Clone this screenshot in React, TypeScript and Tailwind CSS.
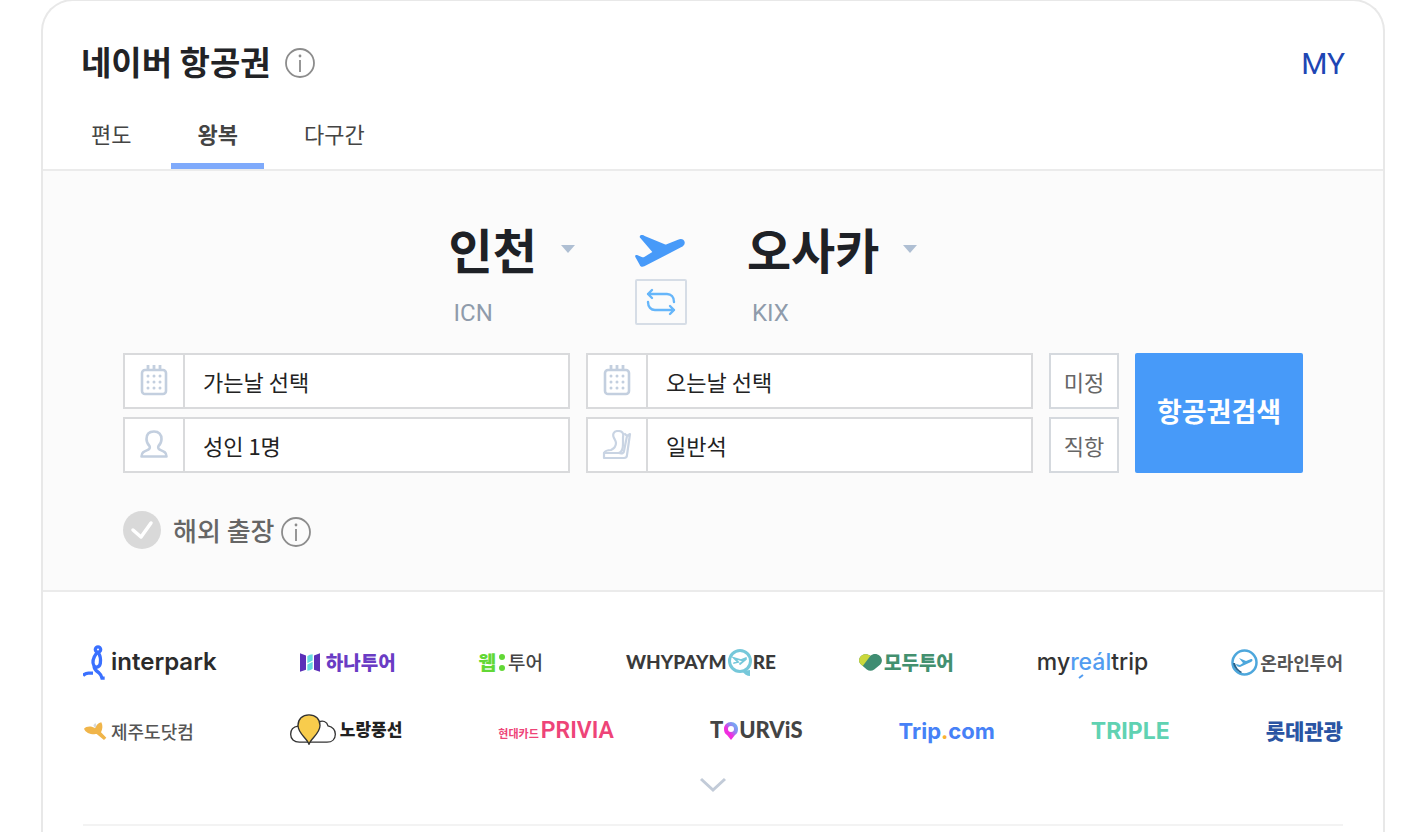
import React, { useState } from "react";

const TRIP_TYPES = ["편도", "왕복", "다구간"];

const InfoIcon: React.FC = () => (
	<svg viewBox="0 0 30 30" className="size-[30px]" fill="none" aria-hidden="true">
		<circle cx="15" cy="15" r="14" stroke="#8c8c8c" strokeWidth="1.8" />
		<circle cx="15" cy="8" r="1.4" fill="#8c8c8c" />
		<path d="M15 12v12" stroke="#8c8c8c" strokeWidth="1.8" />
	</svg>
);

const PlaneIcon: React.FC = () => (
	<svg viewBox="0 0 150 96" className="h-8 w-[50px]" aria-hidden="true">
		<path
			d="M17 1c4-2 8-1 12 2l60 25c2 1 4 1 6 0l34-14c10-4 18-1 20 7 1 7-3 12-11 16L28 94c-7 3-12 1-14-5L1 66c-2-5 2-7 7-5l12 5c3 1 6 1 9-1l23-14L16 9c-3-3-2-7 1-8Z"
			fill="#479af9"
		/>
	</svg>
);

const SwapIcon: React.FC = () => (
	<svg
		viewBox="0 0 30 28"
		className="h-7 w-[30px]"
		fill="none"
		stroke="#66b6fa"
		strokeWidth="2.4"
		strokeLinecap="round"
		strokeLinejoin="round"
		aria-hidden="true"
	>
		<path d="M6 2 2 6l4 4M2 6h19c4 0 7 3 7 8M24 18l4 4-4 4M28 22H9c-4 0-7-3-7-8" />
	</svg>
);

const CalendarIcon: React.FC = () => (
	<svg viewBox="0 0 28 32" className="-mt-0.5 h-8 w-7" fill="none" stroke="#c3cfdf" aria-hidden="true">
		<rect x="2" y="6" width="24" height="24" rx="3" strokeWidth="2.6" />
		<path d="M8 1v5M14 1v5M20 1v5" strokeWidth="2.8" />
		<path
			d="M8 12h.01M14 12h.01M20 12h.01M8 18h.01M14 18h.01M20 18h.01M8 24h.01M14 24h.01M20 24h.01"
			strokeWidth="3"
			strokeLinecap="round"
		/>
	</svg>
);

const PersonIcon: React.FC = () => (
	<svg viewBox="0 0 28 28" className="-mt-0.5 size-7" fill="none" stroke="#c3cfdf" strokeWidth="2.6" strokeLinejoin="round" aria-hidden="true">
		<path d="M14 1.500c-5 0-7.500 3-7.500 7.500 0 3.500 1.500 5.500 3 7 .7 1.500.3 3-1.500 3.800C4 21.500 1.500 22.500 1.500 26.500h25c0-4-2.500-5-6.500-6.700-1.800-.8-2.200-2.300-1.500-3.800 1.500-1.500 3-3.500 3-7C21.500 4.500 19 1.500 14 1.500Z" />
	</svg>
);

const SeatIcon: React.FC = () => (
	<svg viewBox="0 0 30 30" className="size-[30px]" fill="none" stroke="#c9d4e3" strokeWidth="2.2" strokeLinejoin="round" strokeLinecap="round" aria-hidden="true">
		<path d="M12 8c-2-4 0-7 4-7s6 2 5 6v7c0 4-1 8-4 9H2c1-2 3-3 7-3 4-2 5-4 5-7 0-2-1-3-2-5Z" />
		<path d="M2 23v5h20c2 0 3-1 3-3l3-21-3 2-3 15c0 2-2 3-5 2M25 6l-2-2" />
	</svg>
);

type FieldProps = {
	label: string;
	icon: React.ReactNode;
	text: string;
	dropdown?: boolean;
};

const Field: React.FC<FieldProps> = ({ label, icon, text, dropdown }) => (
	<div className="flex h-14 items-stretch border-2 border-[#d9dadc] bg-white">
		<span className="flex w-[60px] shrink-0 items-center justify-center border-r-2 border-[#d9dadc]">{icon}</span>
		{dropdown ? (
			<select aria-label={label} className="min-w-0 flex-1 appearance-none bg-transparent px-[18px] text-[22px]">
				<option>{text}</option>
			</select>
		) : (
			<button type="button" aria-label={text} className="min-w-0 flex-1 px-[18px] text-left text-[22px]">
				{text}
			</button>
		)}
	</div>
);

type AirportProps = {
	label: string;
	city: string;
	code: string;
};

const Airport: React.FC<AirportProps> = ({ label, city, code }) => (
	<div>
		<label className="flex items-center gap-6">
			<select
				aria-label={label}
				className="field-sizing-content h-16 appearance-none bg-transparent pb-0.5 text-5xl leading-[62px] font-bold text-[#1e2126]"
			>
				<option>{city}</option>
			</select>
			<svg viewBox="0 0 14 8" className="h-2 w-3.5" aria-hidden="true">
				<path d="M0 0h14L7 8Z" fill="#afbfd3" />
			</svg>
		</label>
		<p className="mt-5 pl-[5px] font-[Roboto,sans-serif] text-2xl leading-6 text-[#8f9bab]">{code}</p>
	</div>
);

const PartnerLogos: React.FC = () => (
	<div className="flex flex-col gap-[30px]">
		<div className="flex h-10 items-center justify-between">
			<a href="#interpark" className="flex items-center gap-1.5 font-[Inter,sans-serif] text-2xl font-semibold text-[#2b2b2b]">
				<svg viewBox="0 0 66 104" className="h-[35px] w-[22px]" fill="none" stroke="#3a70ff" strokeWidth="10" aria-hidden="true">
					<circle cx="45" cy="13" r="8" />
					<path d="M42 22C30 38 27 52 33 62c6 7 17 4 19-8 2-12 0-22-6-32M33 62c0 12 6 15 14 20 6 5 8 9 10 17h8" />
					<path d="M0 91c7-7 13-8 20-7h10" />
				</svg>
				interpark
			</a>
			<a href="#hanatour" className="flex items-center gap-1.5 text-[19px] font-black text-[#6a3cc4]">
				<svg viewBox="0 0 60 56" className="h-[19px] w-5" aria-hidden="true">
					<path d="M0 0l18 7v43L0 56Z" fill="#5b2fb8" />
					<path d="M60 0L42 7v43l18 6Z" fill="#5b2fb8" />
					<path d="M22 9c4-4 10-6 16-6v19l-16 8ZM22 34l16-8v21c-5 4-11 6-16 6Z" fill="#66d9e0" />
				</svg>
				하나투어
			</a>
			<a href="#webtour" className="flex items-center text-[19px] font-medium text-[#444]">
				<span className="font-black text-[#62d836]">웹</span>
				<svg viewBox="0 0 12 20" className="h-5 w-3" fill="#62d836" aria-hidden="true">
					<circle cx="6" cy="5" r="3" />
					<circle cx="6" cy="16" r="3" />
				</svg>
				투어
			</a>
			<a href="#whypaymore" className="flex items-center font-[Lato,sans-serif] text-[19px] font-black text-[#3a3a3a]">
				WHYPAYM
				<svg viewBox="0 0 26 30" className="h-[30px] w-[26px]" fill="none" aria-hidden="true">
					<circle cx="13" cy="14" r="10.500" stroke="#76c8da" strokeWidth="3" />
					<path d="M15 24l8-1v6c-3 0-6-2-8-5Z" fill="#76c8da" />
					<path d="M7 16l4-1-4-4 7 2 5-2M13 17l6-5" stroke="#76c8da" strokeWidth="1.800" strokeLinecap="round" />
				</svg>
				RE
			</a>
			<a href="#modetour" className="flex items-center gap-0.5 text-[19px] font-black text-[#43906f]">
				<svg viewBox="0 0 68 50" className="h-[17px] w-[23px]" aria-hidden="true">
					<path d="M34 5C42-2 54-1 61 5c8 7 9 18 2 26L45 46c-7 5-15 5-22 0L6 31C-3 23-1 10 8 4c8-6 19-4 26 1Z" fill="#3f8d72" />
					<path d="M34 5L11 35 6 31C-3 23-1 10 8 4c8-6 19-4 26 1Z" fill="#cbd83c" />
				</svg>
				모두투어
			</a>
			<a href="#myrealtrip" className="flex items-center font-[Inter,sans-serif] text-[23px] font-medium text-[#333]">
				my
				<span className="relative text-[#529cf0]">
					reál
					<svg viewBox="0 0 6 5" className="absolute bottom-0 left-2 h-[5px] w-1.5" aria-hidden="true">
						<path d="M1 4l4-3" stroke="#529cf0" strokeWidth="2" />
					</svg>
				</span>
				trip
			</a>
			<a href="#onlinetour" className="flex items-center gap-0.5 text-lg font-bold text-[#555]">
				<svg viewBox="0 0 27 27" className="size-[27px]" fill="none" aria-hidden="true">
					<circle cx="13.500" cy="13.500" r="12" stroke="#4da7dc" strokeWidth="2.500" />
					<path d="M8 9l7 3 5-2c2 0 2 2 0 3l-11 5c-2 0-4-1-4-3l4 1 3-2Z" fill="#4da7dc" />
					<path d="M2 14c1 5 4 8 8 10l1-1c-4-2-6-5-7-9Z" fill="#27628b" />
				</svg>
				온라인투어
			</a>
		</div>
		<div className="flex h-[38px] items-center justify-between">
			<a href="#jejudo" className="flex items-center gap-1 text-lg font-medium text-[#555]">
				<svg viewBox="0 0 70 54" className="h-[18px] w-6" aria-hidden="true">
					<path d="M2 20c7-8 23-9 33-1 3-9 9-16 19-18 5 9 4 21-1 30l16 16-7 7-22-18c-17 2-33-3-38-16Z" fill="#f0b54a" />
					<path d="M30 10l6-7 4 8-5 7Z" fill="#d5d8da" />
				</svg>
				제주도닷컴
			</a>
			<a href="#ybtour" className="flex items-center gap-1 pb-1 text-[17px] font-black text-[#222]">
				<svg viewBox="0 0 138 92" className="h-[31px] w-[46px]" stroke="#333" strokeWidth="4" aria-hidden="true">
					<path d="M28 84C12 84 2 74 2 60c0-13 9-22 22-24 8-15 26-19 38-13 8-4 18-3 25 1 10-7 24-2 27 11 13 3 22 12 22 25 0 15-10 24-25 24Z" fill="#fff" />
					<path d="M57 90C51 72 24 58 24 34 24 15 37 2 57 2s33 13 33 32C90 58 63 72 57 90Z" fill="#f8cc4c" />
				</svg>
				노랑풍선
			</a>
			<a href="#privia" className="flex items-baseline gap-0.5 text-[#ee4478]">
				<span className="text-[11px] font-bold">현대카드</span>
				<span className="font-[Roboto,sans-serif] text-[23px] font-semibold">PRIVIA</span>
			</a>
			<a href="#tourvis" className="flex items-center pb-1 font-[Lato,sans-serif] text-[22px] font-black text-[#444]">
				T
				<svg viewBox="0 0 16 20" className="mt-1 h-5 w-4" aria-hidden="true">
					<defs>
						<linearGradient id="pin" x1="0" y1="1" x2="1" y2="0">
							<stop offset="0.400" stopColor="#f02ddf" />
							<stop offset="0.600" stopColor="#9b7bf0" />
							<stop offset="1" stopColor="#59c9f4" />
						</linearGradient>
					</defs>
					<path d="M8 1C4 1 1 4 1 8c0 3 1 5 3 6l4 5 4-5c2-1 3-3 3-6 0-4-3-7-7-7Zm0 4a3 3 0 1 1 0 6 3 3 0 0 1 0-6Z" fill="url(#pin)" />
				</svg>
				URViS
			</a>
			<a href="#tripcom" className="font-[Inter,sans-serif] text-[22px] font-bold text-[#4681f7]">
				Trip<span className="text-[#f9b233]">.</span>com
			</a>
			<a href="#triple" className="font-[Inter,sans-serif] text-[23px] font-bold text-[#60d2b2]">
				TRIPLE
			</a>
			<a href="#lottetour" className="text-[21px] font-black text-[#2a54a3]">
				롯데관광
			</a>
		</div>
	</div>
);

const App: React.FC = () => {
	const [tripType, setTripType] = useState("왕복");
	const [business, setBusiness] = useState(false);

	return (
		<main className="-mt-px mr-[39px] ml-[41px] min-h-[calc(100vh+1px)] rounded-t-[32px] border-2 border-b-0 border-[#e8e8e8] bg-white font-['Noto_Sans_CJK_KR',sans-serif] text-[#222]">
			<header className="flex h-[86px] items-end justify-between pr-[38px] pl-[38px]">
				<div className="flex h-12 items-center gap-3.5">
					<h1 className="pb-1 text-[33px] leading-[44px] font-bold text-[#222326]">네이버 항공권</h1>
					<button type="button" aria-label="안내">
						<InfoIcon />
					</button>
				</div>
				<a href="#my" className="font-[Roboto,sans-serif] text-3xl leading-[46px] text-[#1e46b4]">
					MY
				</a>
			</header>

			{/* Trip type tabs */}
			<nav role="tablist" className="mt-4 flex gap-3.5 border-b-2 border-[#ebebeb] pl-[22px]">
				{TRIP_TYPES.map((type) => (
					<button
						key={type}
						type="button"
						role="tab"
						aria-selected={type === tripType}
						onClick={() => setTripType(type)}
						className={`h-[66px] border-b-[6px] px-[26px] text-[22px] text-[#444] ${
							type === tripType ? "border-[#7faafb] font-bold" : "border-transparent"
						}`}
					>
						{type}
					</button>
				))}
			</nav>

			{/* Search panel */}
			<section className="border-b-2 border-[#ebebeb] bg-[#fbfbfb] px-20 pt-[46px] pb-[41px]">
				<div className="flex justify-center gap-[60px] pr-[60px]">
					<Airport label="출발지" city="인천" code="ICN" />
					<div className="flex flex-col gap-3 pt-[18px]">
						<PlaneIcon />
						<button
							type="button"
							aria-label="출발지와 도착지 바꾸기"
							className="flex h-[46px] w-[52px] items-center justify-center rounded-xs border-2 border-[#d6dde6]"
						>
							<SwapIcon />
						</button>
					</div>
					<Airport label="도착지" city="오사카" code="KIX" />
				</div>

				<form className="mt-7 flex gap-4" onSubmit={(e) => e.preventDefault()}>
					<div className="grid flex-1 grid-cols-2 gap-x-4 gap-y-2">
						<Field label="가는날" icon={<CalendarIcon />} text="가는날 선택" />
						<Field label="오는날" icon={<CalendarIcon />} text="오는날 선택" />
						<Field label="인원" icon={<PersonIcon />} text="성인 1명" dropdown />
						<Field label="좌석" icon={<SeatIcon />} text="일반석" dropdown />
					</div>
					<div className="flex w-[70px] flex-col gap-2 text-[22px] text-[#666]">
						<button type="button" className="h-14 border-2 border-[#d5d9de] bg-white">
							미정
						</button>
						<button type="button" className="h-14 border-2 border-[#d5d9de] bg-white">
							직항
						</button>
					</div>
					<button type="submit" className="w-[168px] rounded-xs bg-[#479af9] pb-1 text-[27px] font-bold text-white">
						항공권검색
					</button>
				</form>

				<div className="mt-[38px] flex h-[38px] items-center gap-1.5">
					<label className="flex items-center gap-3 text-[26px] leading-[38px] font-medium text-[#666]">
						<span className="relative size-[38px]">
							<input
								type="checkbox"
								checked={business}
								onChange={(e) => setBusiness(e.target.checked)}
								className="block size-[38px] appearance-none rounded-full bg-[#d9d9d9] checked:bg-[#479af9]"
							/>
							<svg viewBox="0 0 38 38" className="pointer-events-none absolute inset-0" fill="none" aria-hidden="true">
								<path d="M10 19l8 7 10-14" stroke="#fff" strokeWidth="3.500" strokeLinecap="round" strokeLinejoin="round" />
							</svg>
						</span>
						해외 출장
					</label>
					<button type="button" aria-label="해외 출장 안내" className="pt-1">
						<InfoIcon />
					</button>
				</div>
			</section>

			{/* Partners */}
			<section className="px-10 pt-[50px]">
				<PartnerLogos />
				<button type="button" aria-label="더보기" className="mx-auto mt-[22px] block">
					<svg viewBox="0 0 28 26" className="h-[26px] w-7" fill="none" aria-hidden="true">
						<path d="M2 7l12 11L26 7" stroke="#c2cbd8" strokeWidth="3" />
					</svg>
				</button>
				<hr className="mt-[26px] border-t-2 border-[#f3f3f3]" />
			</section>
		</main>
	);
};

export default App;
